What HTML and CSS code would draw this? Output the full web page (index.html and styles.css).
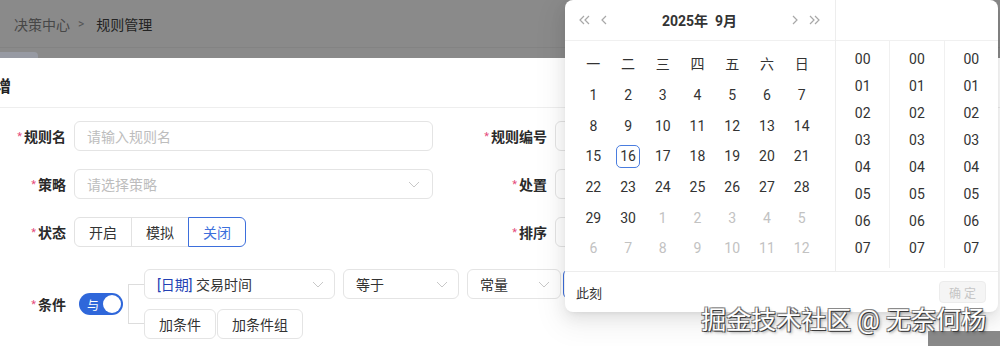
FILE: index.html
```html
<!DOCTYPE html>
<html lang="zh-CN">
<head>
<meta charset="utf-8">
<title>规则管理</title>
<link rel="stylesheet" href="styles.css">
</head>
<body>
<div class="page">
  <header class="topbar">
    <nav class="crumbs">
      <span class="crumb">决策中心</span>
      <span class="sep">&gt;</span>
      <span class="crumb current">规则管理</span>
    </nav>
  </header>
  <div class="tabline"><span class="tab"></span></div>

  <section class="modal">
    <div class="modal-head"><h2 class="modal-title">新增</h2></div>
    <div class="form">
      <label class="label"><span class="req">*</span>规则名</label>
      <div class="input placeholder">请输入规则名</div>
      <label class="label"><span class="req">*</span>规则编号</label>
      <div class="input"></div>

      <label class="label"><span class="req">*</span>策略</label>
      <div class="input placeholder">请选择策略
        <svg class="chev" width="12" height="7" viewBox="0 0 12 7"><polyline points="1,1 6,6 11,1" fill="none" stroke="#c8c8c8" stroke-width="1"/></svg>
      </div>
      <label class="label"><span class="req">*</span>处置</label>
      <div class="input"></div>

      <label class="label"><span class="req">*</span>状态</label>
      <div class="radios">
        <span class="radio first">开启</span>
        <span class="radio">模拟</span>
        <span class="radio active last">关闭</span>
      </div>
      <label class="label"><span class="req">*</span>排序</label>
      <div class="input"></div>

      <label class="label cond-label"><span class="req">*</span>条件</label>
      <div class="cond">
        <span class="switch"><span class="switch-text">与</span><span class="knob"></span></span>
        <span class="bracket"></span>
        <div class="cond-rows">
          <div class="cond-row">
            <div class="sel sel-field"><span><span class="tag">[日期]</span> 交易时间</span>
              <svg class="chev" width="12" height="7" viewBox="0 0 12 7"><polyline points="1,1 6,6 11,1" fill="none" stroke="#c8c8c8" stroke-width="1"/></svg>
            </div>
            <div class="sel sel-op"><span>等于</span>
              <svg class="chev" width="12" height="7" viewBox="0 0 12 7"><polyline points="1,1 6,6 11,1" fill="none" stroke="#c8c8c8" stroke-width="1"/></svg>
            </div>
            <div class="sel sel-type"><span>常量</span>
              <svg class="chev" width="12" height="7" viewBox="0 0 12 7"><polyline points="1,1 6,6 11,1" fill="none" stroke="#c8c8c8" stroke-width="1"/></svg>
            </div>
            <div class="sel sel-value"></div>
          </div>
          <div class="cond-row btns">
            <button class="btn" type="button">加条件</button>
            <button class="btn" type="button">加条件组</button>
          </div>
        </div>
      </div>
    </div>
  </section>

  <div class="corner"></div>

  <div class="picker">
    <div class="picker-body">
      <div class="date-panel">
        <div class="panel-head">
          <span class="nav-left">
            <svg width="12" height="12" viewBox="0 0 12 12"><polyline points="6,2 2,6 6,10" fill="none" stroke="#a8a8a8" stroke-width="1.2"/><polyline points="11,2 7,6 11,10" fill="none" stroke="#a8a8a8" stroke-width="1.2"/></svg>
            <svg width="8" height="12" viewBox="0 0 8 12"><polyline points="6,2 2,6 6,10" fill="none" stroke="#a8a8a8" stroke-width="1.2"/></svg>
          </span>
          <span class="ym">2025年&nbsp;&nbsp;9月</span>
          <span class="nav-right">
            <svg width="8" height="12" viewBox="0 0 8 12"><polyline points="2,2 6,6 2,10" fill="none" stroke="#a8a8a8" stroke-width="1.2"/></svg>
            <svg width="12" height="12" viewBox="0 0 12 12"><polyline points="1,2 5,6 1,10" fill="none" stroke="#a8a8a8" stroke-width="1.2"/><polyline points="6,2 10,6 6,10" fill="none" stroke="#a8a8a8" stroke-width="1.2"/></svg>
          </span>
        </div>
        <div class="cal">
          <div class="week"><span>一</span><span>二</span><span>三</span><span>四</span><span>五</span><span>六</span><span>日</span></div>
          <div class="days">
            <span>1</span><span>2</span><span>3</span><span>4</span><span>5</span><span>6</span><span>7</span>
            <span>8</span><span>9</span><span>10</span><span>11</span><span>12</span><span>13</span><span>14</span>
            <span>15</span><span><b class="today">16</b></span><span>17</span><span>18</span><span>19</span><span>20</span><span>21</span>
            <span>22</span><span>23</span><span>24</span><span>25</span><span>26</span><span>27</span><span>28</span>
            <span>29</span><span>30</span><span class="out">1</span><span class="out">2</span><span class="out">3</span><span class="out">4</span><span class="out">5</span>
            <span class="out">6</span><span class="out">7</span><span class="out">8</span><span class="out">9</span><span class="out">10</span><span class="out">11</span><span class="out">12</span>
          </div>
        </div>
      </div>
      <div class="time-panel">
        <div class="panel-head"></div>
        <div class="time-cols">
          <ul class="time-col"><li>00</li><li>01</li><li>02</li><li>03</li><li>04</li><li>05</li><li>06</li><li>07</li></ul>
          <ul class="time-col"><li>00</li><li>01</li><li>02</li><li>03</li><li>04</li><li>05</li><li>06</li><li>07</li></ul>
          <ul class="time-col"><li>00</li><li>01</li><li>02</li><li>03</li><li>04</li><li>05</li><li>06</li><li>07</li></ul>
        </div>
      </div>
    </div>
    <div class="picker-foot">
      <span class="now">此刻</span>
      <button class="ok" type="button" disabled>确 定</button>
    </div>
  </div>

  <div class="watermark">掘金技术社区 @ 无奈何杨</div>
</div>
</body>
</html>
```

FILE: styles.css
```css
* { box-sizing: border-box; margin: 0; padding: 0; }
html, body { width: 1000px; height: 346px; overflow: hidden; }
body {
  font-family: "Roboto", "Noto Sans CJK SC", sans-serif;
  font-size: 14px;
  color: #333;
  background: #fff;
}
.page { position: relative; width: 1000px; height: 346px; overflow: hidden; }

/* masked top bar */
.topbar {
  height: 48px;
  background: #8a8a8a;
  border-bottom: 1px solid #838383;
  display: flex;
  align-items: center;
  padding-left: 14px;
}
.crumbs { display: flex; align-items: center; font-size: 14px; color: #474747; }
.sep { margin: 0 12px 0 8px; font-size: 12px; color: #545454; }
.current { color: #232323; }
.tabline { height: 10px; padding-top: 4px; background: #8a8a8a; }
.tab { display: block; width: 38px; height: 6px; background: #979aa3; border-radius: 0 4px 0 0; }

/* modal */
.modal { background: #fff; height: 288px; }
.modal-head {
  height: 50px;
  border-bottom: 1px solid #eeeeee;
  display: flex;
  align-items: center;
  padding-top: 4px;
}
.modal-title { font-size: 16px; font-weight: 700; margin-left: -21px; color: #222; }

.form {
  display: grid;
  grid-template-columns: 66px 359px 106px 359px;
  column-gap: 8px;
  row-gap: 18px;
  padding-top: 13px;
  align-items: center;
}
.label {
  text-align: right;
  font-weight: 700;
  font-size: 14px;
  color: #2a2a2a;
  white-space: nowrap;
}
.req { color: #e5487c; font-weight: 400; font-size: 11px; margin-right: 2px; vertical-align: 2px; }

.input {
  height: 30px;
  border: 1px solid #e4e4e4;
  border-radius: 6px;
  display: flex;
  align-items: center;
  justify-content: space-between;
  padding: 0 12px;
}
.placeholder { color: #bdbdbd; }
.chev { flex: none; }

.radios { display: flex; height: 30px; }
.radio {
  display: flex;
  align-items: center;
  padding: 0 14px;
  border: 1px solid #e2e2e2;
  margin-left: -1px;
  color: #333;
  background: #fff;
}
.radio.first { margin-left: 0; border-radius: 6px 0 0 6px; }
.radio.last { border-radius: 0 6px 6px 0; }
.radio.active { border-color: #3d6fdc; color: #3d6fdc; position: relative; }

/* condition */
.cond-label { margin-top: 4px; }
.cond { grid-column: 2 / -1; display: flex; align-items: center; margin-top: 4px; }
.switch {
  margin-left: 5px;
  width: 44px;
  height: 22px;
  border-radius: 11px;
  background: #2f67da;
  display: flex;
  align-items: center;
  justify-content: space-between;
  padding: 0 2px 0 8px;
  color: #fff;
  font-size: 12px;
  flex: none;
}
.knob { width: 18px; height: 18px; border-radius: 50%; background: #fff; }
.bracket {
  flex: none;
  margin-left: 5px;
  width: 16px;
  height: 40px;
  border: 1px solid #dddddd;
  border-right: none;
}
.cond-rows { display: flex; flex-direction: column; gap: 10px; }
.cond-row { display: flex; gap: 8px; }
.cond-row.btns { gap: 1px; }
.sel {
  height: 30px;
  border: 1px solid #e4e4e4;
  border-radius: 6px;
  padding: 0 10px 0 12px;
  display: flex;
  align-items: center;
  justify-content: space-between;
  color: #333;
  flex: none;
}
.tag { color: #2341b4; }
.sel-field { width: 191px; }
.sel-op { width: 116px; }
.sel-type { width: 94px; }
.sel-value { width: 200px; margin-left: -6px; border-color: #3d6fdc; }
.btn {
  height: 30px;
  border: 1px solid #e4e4e4;
  border-radius: 6px;
  padding: 0 14px;
  background: #fff;
  font-family: inherit;
  font-size: 14px;
  color: #333;
}

.corner {
  position: absolute;
  right: 0;
  bottom: 0;
  width: 72px;
  height: 15px;
  background: #8a8a8a;
}

/* date picker popup */
.picker {
  position: absolute;
  left: 565px;
  top: 0;
  width: 433px;
  height: 312px;
  background: #fff;
  border-radius: 8px;
  box-shadow: 0 3px 6px -4px rgba(0,0,0,0.12), 0 6px 16px 0 rgba(0,0,0,0.08), 0 9px 28px 8px rgba(0,0,0,0.05);
  display: flex;
  flex-direction: column;
  overflow: hidden;
}
.picker-body { display: flex; height: 272px; border-bottom: 1px solid #ededed; }
.date-panel { width: 270px; }
.panel-head {
  height: 41px;
  border-bottom: 1px solid #f0f0f0;
  display: flex;
  align-items: center;
  padding: 0 14px 0 13px;
}
.nav-left, .nav-right { display: flex; align-items: center; gap: 10px; }
.ym { flex: 1; text-align: center; font-weight: 700; color: #333; font-size: 14px; }

.cal { padding: 7px 16px 0 11px; }
.week, .days { display: grid; grid-template-columns: repeat(7, 1fr); }
.week span { height: 30px; display: flex; align-items: center; justify-content: center; color: #333; }
.week { margin-bottom: 2px; }
.days span { height: 30.6px; display: flex; align-items: center; justify-content: center; color: #333; }
.days span.out { color: #c2c2c2; }
.today {
  width: 24px;
  height: 23px;
  display: flex;
  align-items: center;
  justify-content: center;
  border: 1px solid #4a7ddf;
  border-radius: 5px;
  font-weight: 400;
}

.time-panel { width: 163px; border-left: 1px solid #ededed; }
.time-cols { display: flex; height: 227px; }
.time-col { flex: 1; list-style: none; padding-top: 4px; }
.time-col + .time-col { border-left: 1px solid #f0f0f0; }
.time-col li { height: 27px; display: flex; align-items: center; justify-content: center; color: #333; }

.picker-foot {
  height: 40px;
  display: flex;
  align-items: center;
  justify-content: space-between;
  padding: 0 12px 0 11px;
}
.now { font-size: 13px; color: #333; }
.ok {
  width: 47px;
  height: 22px;
  border: 1px solid #ececec;
  border-radius: 4px;
  background: #f5f5f5;
  color: #c6c6c6;
  font-family: inherit;
  font-size: 12px;
}

.watermark {
  position: absolute;
  right: 14px;
  bottom: 13px;
  font-size: 25px;
  line-height: 25px;
  color: #fff;
  white-space: nowrap;
  text-shadow: 1px 1px 0 #3a3a3a, -1px -1px 0 #8a8a8a, 1px -1px 0 #777, -1px 1px 0 #777, 2px 2px 3px rgba(0,0,0,0.35);
}
```
